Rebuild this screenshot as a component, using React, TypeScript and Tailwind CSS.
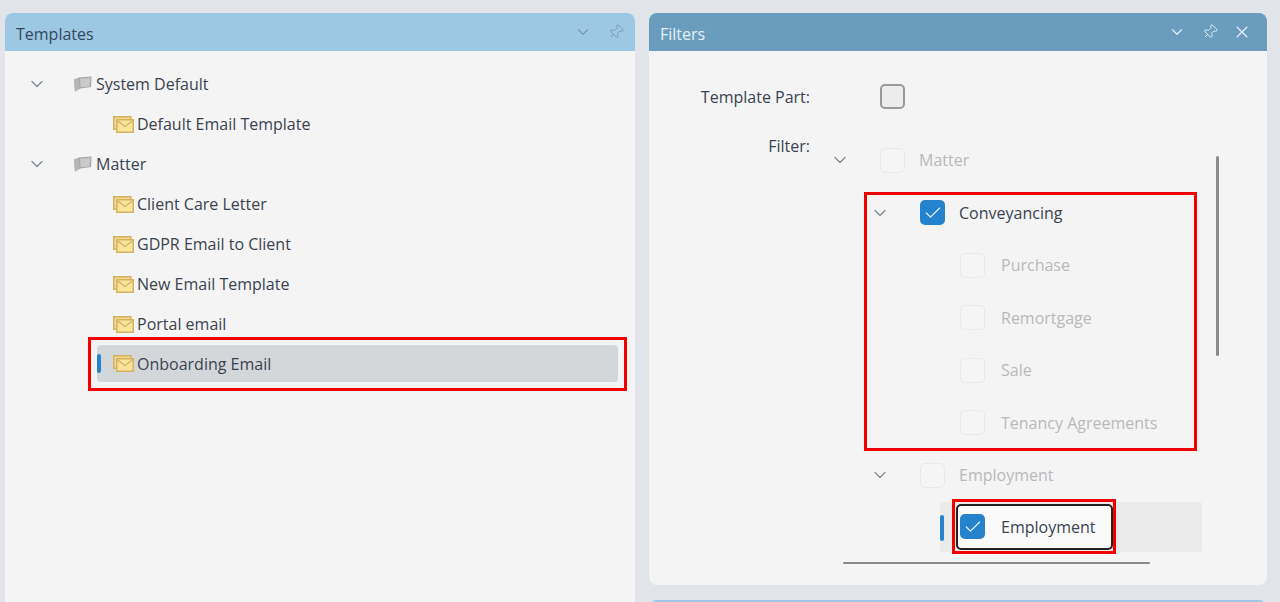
import { ChevronDown, Pin, X, Check } from 'lucide-react';

const font = "[font-family:'Open_Sans',sans-serif]";

function FolderIcon() {
  return (
    <svg width="20" height="16" viewBox="0 0 20 16" className="shrink-0">
      <path d="M1 3.5 L6 1.5 L18.5 0.5 L18 11 L7 12.5 L2 15.5 Z" fill="#9f9f9f" />
      <path d="M7 2.5 L17.5 1.5 L17 10.5 L7.5 11.5 Z" fill="#c9c9c9" />
      <path d="M1 3.5 L6 2 L7 12.5 L2 15.5 Z" fill="#b5b5b5" />
    </svg>
  );
}

function MailIcon() {
  return (
    <svg width="21" height="17" viewBox="0 0 21 17" className="shrink-0">
      <rect x="0.75" y="0.75" width="17" height="12.5" fill="#f2d98c" stroke="#d4b262" strokeWidth="1.5" />
      <rect x="3.75" y="3.75" width="16.5" height="12.5" fill="#f9e29a" stroke="#d4b262" strokeWidth="1.5" />
      <path d="M4 4.5 L12 10.5 L20 4.5" fill="none" stroke="#d4b262" strokeWidth="1.25" />
    </svg>
  );
}

function Box({ checked }: { checked?: boolean }) {
  if (checked) {
    return (
      <span className="flex h-[25px] w-[25px] shrink-0 items-center justify-center rounded-[5px] bg-[#2582cd]">
        <Check className="h-[20px] w-[20px] text-[#e8f2fb]" strokeWidth={1.4} />
      </span>
    );
  }
  return <span className="h-[25px] w-[25px] shrink-0 rounded-[5px] border border-[#e9e9e9] bg-[#f5f5f5]" />;
}

function TreeGroup({ label }: { label: string }) {
  return (
    <div className="flex h-10 items-center">
      <ChevronDown className="ml-[22px] h-5 w-5 text-[#7d8a96]" strokeWidth={1.5} />
      <span className="ml-[26px] mr-[3px]"><FolderIcon /></span>
      <span>{label}</span>
    </div>
  );
}

function TreeItem({ label }: { label: string }) {
  return (
    <div className="flex h-10 items-center pl-[108px]">
      <span className="mr-[3px]"><MailIcon /></span>
      <span>{label}</span>
    </div>
  );
}

function FilterRow({ label, indent, checked, chevron }: { label: string; indent: string; checked?: boolean; chevron?: boolean }) {
  return (
    <div className={`flex h-[52.5px] items-center ${indent}`}>
      {chevron && <ChevronDown className="mr-[30px] h-5 w-5 text-[#7d8a96]" strokeWidth={1.5} />}
      <Box checked={checked} />
      <span className={`${chevron ? 'ml-[14px]' : 'ml-[16px]'} ${checked ? 'text-[#3a4350]' : 'text-[#b9b9b9]'}`}>{label}</span>
    </div>
  );
}

export default function App() {
  return (
    <div className={`${font} flex h-[602px] w-[1280px] gap-[14px] overflow-hidden bg-[#e1e5ea] pl-[5px] pr-[13px] pt-[13px] text-[16px] text-[#3a4350]`}>
      {/* templates panel */}
      <div className="relative h-[640px] w-[630px] shrink-0 rounded-t-lg bg-[#f4f4f4]">
        <div className="flex h-[38px] items-center justify-between rounded-t-lg bg-[#9dc8e4] pl-[11px] pr-[11px] text-[#33475c]">
          <span className="pt-[4px]">Templates</span>
          <div className="flex items-center gap-[16px] text-[#7a98b0]">
            <ChevronDown className="h-[18px] w-[18px]" strokeWidth={1.5} />
            <Pin className="h-4 w-4 rotate-45" strokeWidth={1.4} />
          </div>
        </div>
        <div className="pt-[13px]">
          <TreeGroup label="System Default" />
          <TreeItem label="Default Email Template" />
          <TreeGroup label="Matter" />
          <TreeItem label="Client Care Letter" />
          <TreeItem label="GDPR Email to Client" />
          <TreeItem label="New Email Template" />
          <TreeItem label="Portal email" />
          <div className="relative ml-[92px] mr-[17px] mt-[1px] flex h-[37px] items-center rounded-[4px] bg-[#d4d7da] pl-[16px]">
            <span className="absolute left-0 top-[9px] h-[19px] w-[4px] rounded-full bg-[#2582cd]" />
            <span className="mr-[3px]"><MailIcon /></span>
            <span>Onboarding Email</span>
          </div>
        </div>
        <div className="absolute left-[83px] top-[324px] h-[54px] w-[539px] border-[3px] border-[#f00000]" />
      </div>

      <div className="flex w-[618px] shrink-0 flex-col gap-[15px]">
        {/* filters panel */}
        <div className="relative h-[572px] shrink-0 rounded-lg bg-[#f4f4f4]">
          <div className="flex h-[38px] items-center justify-between rounded-t-lg bg-[#6a9dbd] pl-[11px] pr-[15px] text-[#e6f0f6]">
            <span className="pt-[4px]">Filters</span>
            <div className="flex items-center">
              <ChevronDown className="h-[18px] w-[18px]" strokeWidth={1.5} />
              <Pin className="ml-[16px] h-4 w-4 rotate-45" strokeWidth={1.4} />
              <X className="ml-[14px] h-5 w-5" strokeWidth={1.4} />
            </div>
          </div>
          <div className="flex items-center pt-[33px]">
            <span className="w-[161px] text-right">Template Part:</span>
            <span className="ml-[70px] h-[25px] w-[25px] rounded-[5px] border-2 border-[#999] bg-[#ececec]" />
          </div>
          <div className="mt-[25px] flex">
            <span className="w-[161px] text-right">Filter:</span>
            <div className="ml-[20px] w-[372px]">
              <FilterRow label="Matter" indent="pl-0" chevron />
              <FilterRow label="Conveyancing" indent="pl-[40px]" checked chevron />
              <FilterRow label="Purchase" indent="pl-[130px]" />
              <FilterRow label="Remortgage" indent="pl-[130px]" />
              <FilterRow label="Sale" indent="pl-[130px]" />
              <FilterRow label="Tenancy Agreements" indent="pl-[130px]" />
              <FilterRow label="Employment" indent="pl-[40px]" chevron />
              <div className="relative ml-[110px] flex h-[50px] items-center rounded-[3px] bg-[#eaeaea]">
                <span className="absolute left-0 top-[13px] h-[26px] w-[4px] rounded-full bg-[#2582cd]" />
                <div className="ml-[16px] flex h-[46px] w-[157px] items-center rounded-[5px] border-2 border-[#222] bg-[#fafafa] pl-[2px]">
                  <Box checked />
                  <span className="ml-[16px] text-[#3a4350]">Employment</span>
                </div>
              </div>
            </div>
          </div>
          <div className="absolute left-[567px] top-[143px] h-[200px] w-[3px] rounded-full bg-[#8a8a8a]" />
          <div className="absolute left-[194px] top-[549px] h-[2px] w-[307px] rounded-full bg-[#8a8a8a]" />
          <div className="absolute left-[215px] top-[179px] h-[259px] w-[333px] border-[3px] border-[#f00000]" />
          <div className="absolute left-[303px] top-[486px] h-[55px] w-[164px] border-[3px] border-[#f00000]" />
        </div>
        <div className="h-10 shrink-0 rounded-t-lg bg-[#9dc8e4]" />
      </div>
    </div>
  );
}
